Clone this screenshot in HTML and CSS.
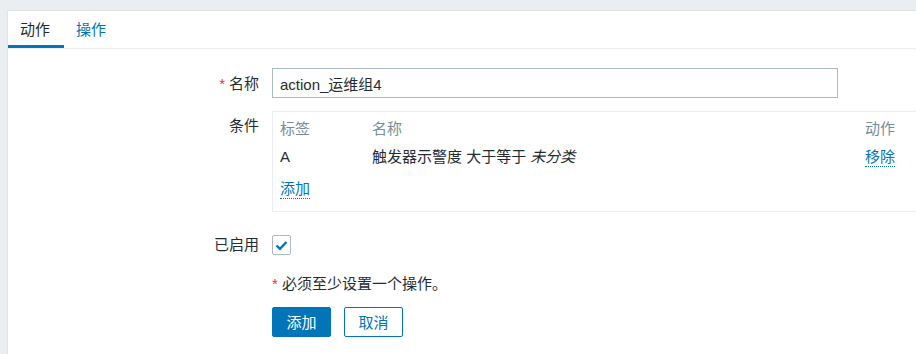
FILE: index.html
```html
<!DOCTYPE html>
<html lang="zh">
<head>
<meta charset="utf-8">
<title>动作</title>
<link rel="stylesheet" href="styles.css">
</head>
<body>
<div class="panel">
  <ul class="tabs">
    <li class="tab active">动作</li>
    <li class="tab"><a class="tab-link">操作</a></li>
  </ul>
  <form class="form">
    <div class="row row-name">
      <label class="label"><span class="req">*</span> 名称</label>
      <div class="control"><input class="text-input" type="text" value="action_运维组4"></div>
    </div>
    <div class="row row-cond">
      <label class="label label-top">条件</label>
      <div class="control">
        <div class="cond-box">
          <table class="cond-table">
            <thead>
              <tr><th class="c1">标签</th><th class="c2">名称</th><th class="c3">动作</th></tr>
            </thead>
            <tbody>
              <tr><td>A</td><td>触发器示警度 大于等于 <em>未分类</em></td><td><a class="link">移除</a></td></tr>
            </tbody>
          </table>
          <div class="add-row"><a class="link">添加</a></div>
        </div>
      </div>
    </div>
    <div class="row row-check">
      <label class="label">已启用</label>
      <div class="control">
        <span class="checkbox"><svg width="13" height="11" viewBox="0 0 13 11"><polyline points="1.5,5.5 5,8.8 11.5,2" fill="none" stroke="#0275b8" stroke-width="2.4"/></svg></span>
      </div>
    </div>
    <div class="row row-warn">
      <div class="label"></div>
      <div class="control"><span class="req req-warn">*</span> 必须至少设置一个操作。</div>
    </div>
    <div class="row row-buttons">
      <div class="label"></div>
      <div class="control buttons">
        <button type="button" class="btn btn-primary">添加</button>
        <button type="button" class="btn btn-alt">取消</button>
      </div>
    </div>
  </form>
</div>
</body>
</html>
```
FILE: styles.css
```css
html, body {
  margin: 0;
  padding: 0;
  overflow: hidden;
}
body {
  background: #ebeef0;
  font-family: "Liberation Sans", "Noto Sans CJK SC", Arial, sans-serif;
  font-size: 15px;
  line-height: 17px;
  color: #1f2c33;
  height: 354px;
}
.panel {
  margin: 10px 0 0 7px;
  width: 909px;
  height: 343px;
  background: #fff;
  border: 1px solid #dfe4e7;
  border-right: none;
  border-bottom: none;
}
.tabs {
  list-style: none;
  margin: 0;
  padding: 0;
  display: flex;
  height: 37px;
  border-bottom: 1px solid #ebeef0;
}
.tab {
  padding: 0 14px 0 12px;
  display: flex;
  align-items: center;
  box-sizing: border-box;
  height: 37px;
  padding-top: 2px;
  border-bottom: 3px solid transparent;
}
.tab.active {
  border-bottom-color: #0275b8;
}
.tab-link {
  color: #0275b8;
}
.form {
  padding-top: 19px;
}
.row {
  display: flex;
}
.label {
  width: 251px;
  flex: none;
  padding-right: 13px;
  text-align: right;
  display: flex;
  align-items: center;
  justify-content: flex-end;
}
.label-top {
  align-items: flex-start;
  padding-top: 6px;
}
.req {
  color: #e33734;
  margin-right: 4px;
}
.req-warn {
  margin-right: 0;
}
.control {
  flex: 1;
}
.text-input {
  display: block;
  box-sizing: border-box;
  width: 566px;
  height: 30px;
  margin: 0;
  border: 1px solid #acbbc2;
  padding: 0 7px;
  font: inherit;
  font-size: 15px;
  color: #1f2c33;
  outline: none;
}
.row-cond {
  margin-top: 13px;
}
.cond-box {
  box-sizing: border-box;
  width: 644px;
  height: 101px;
  border: 1px solid #ebeef0;
  border-right: none;
  padding: 2px 0 0 7px;
}
.cond-table {
  border-collapse: collapse;
  table-layout: fixed;
  width: 100%;
}
.cond-table th, .cond-table td {
  padding: 0;
  height: 28px;
  text-align: left;
  font-weight: normal;
  vertical-align: middle;
}
.cond-table th {
  color: #768d99;
}
.c1 { width: 92px; }
.c2 { width: 493px; }
.cond-table em {
  font-style: italic;
}
.link {
  color: #0275b8;
  border-bottom: 1px dotted #0275b8;
  padding-bottom: 1px;
  cursor: pointer;
}
.add-row {
  margin-top: 10px;
}
.row-check {
  margin-top: 22px;
  height: 21px;
}
.checkbox {
  display: flex;
  align-items: center;
  justify-content: center;
  box-sizing: border-box;
  width: 19px;
  height: 20px;
  border: 1px solid #acbbc2;
  border-radius: 2px;
  margin-top: 1px;
}
.row-warn {
  margin-top: 20px;
}
.row-buttons {
  margin-top: 15px;
}
.buttons {
  display: flex;
  gap: 13px;
}
.btn {
  box-sizing: border-box;
  width: 59px;
  height: 30px;
  border-radius: 2px;
  font: inherit;
  font-size: 15px;
  padding: 0;
  margin: 0;
  cursor: pointer;
}
.btn-primary {
  background: #0275b8;
  border: 1px solid #0275b8;
  color: #fff;
}
.btn-alt {
  background: #fff;
  border: 1px solid #0275b8;
  color: #0275b8;
}
```
